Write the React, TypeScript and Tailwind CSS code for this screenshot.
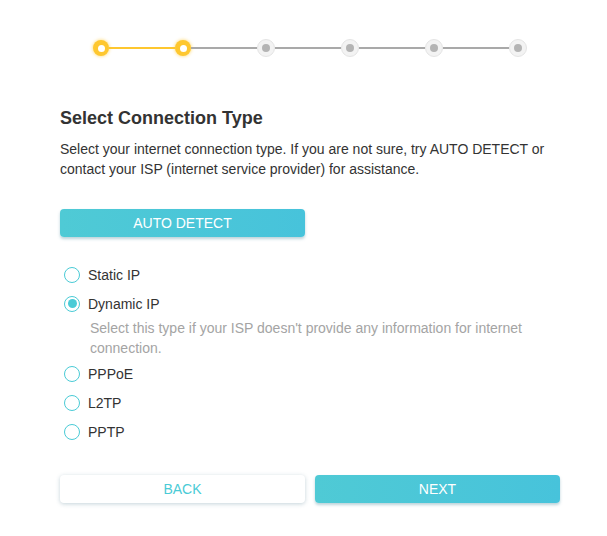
import React from "react";

const steps = [true, true, false, false, false, false];

const options = [
  { label: "Static IP", checked: false },
  { label: "Dynamic IP", checked: true, hint: "Select this type if your ISP doesn't provide any information for internet connection." },
  { label: "PPPoE", checked: false },
  { label: "L2TP", checked: false },
  { label: "PPTP", checked: false },
];

const Dot = ({ done }: { done: boolean }) =>
  done ? (
    <div className="w-4 h-4 shrink-0 rounded-full bg-[#fec72f] flex items-center justify-center shadow-[0_0_3px_1px_rgba(254,199,47,0.45)]">
      <div className="w-[7px] h-[7px] rounded-full bg-white" />
    </div>
  ) : (
    <div className="w-[18px] h-[18px] shrink-0 rounded-full bg-[#f3f3f3] border border-[#e4e4e4] flex items-center justify-center">
      <div className="w-[8px] h-[8px] rounded-full bg-[#b4b4b4]" />
    </div>
  );

const App = () => {
  return (
    <div className="w-[607px] h-[536px] bg-white font-['Liberation_Sans',Arial,sans-serif] text-[#333]">
      <div className="ml-[60px] w-[500px] pt-[39px]">
        <div className="flex items-center ml-[33px] w-[434px]">
          {steps.map((done, i) => (
            <React.Fragment key={i}>
              {i > 0 && (
                <div className={`flex-1 h-[2px] ${i === 1 ? "bg-[#fec72f]" : "bg-[#a9a9a9]"}`} />
              )}
              <Dot done={done} />
            </React.Fragment>
          ))}
        </div>

        <h1 className="mt-[49px] text-[18px] leading-6 font-bold text-[#333]">
          Select Connection Type
        </h1>
        <p className="mt-[9px] text-sm leading-5 text-[#333]">
          Select your internet connection type. If you are not sure, try AUTO DETECT or contact your ISP (internet service provider) for assistance.
        </p>

        <button className="mt-[30px] w-[245px] h-[28px] rounded-[4px] bg-linear-to-r from-[#4fcad5] to-[#47c3db] text-white text-sm shadow-[0_2px_3px_rgba(60,130,150,0.35)]">
          AUTO DETECT
        </button>

        <div className="mt-[23px] flex flex-col">
          {options.map((o) => (
            <div key={o.label}>
              <label className="flex items-center h-[29px] gap-2 pl-1 cursor-pointer">
                <span className="w-4 h-4 rounded-full border-[1.5px] border-[#4acbd6] bg-white flex items-center justify-center">
                  {o.checked && <span className="w-[9px] h-[9px] rounded-full bg-[#4acbd6]" />}
                </span>
                <span className="text-sm">{o.label}</span>
              </label>
              {o.hint && (
                <p className="pl-[30px] pr-8 pb-px text-sm leading-5 text-[#a4a4a4]">{o.hint}</p>
              )}
            </div>
          ))}
        </div>

        <div className="mt-[29px] flex gap-[10px]">
          <button className="flex-1 h-[28px] rounded-[4px] bg-white text-[#4acbd6] text-sm shadow-[0_1px_4px_rgba(60,110,130,0.3)]">
            BACK
          </button>
          <button className="flex-1 h-[28px] rounded-[4px] bg-linear-to-r from-[#4fcad5] to-[#47c3db] text-white text-sm shadow-[0_2px_3px_rgba(60,130,150,0.35)]">
            NEXT
          </button>
        </div>
      </div>
    </div>
  );
};

export default App;
